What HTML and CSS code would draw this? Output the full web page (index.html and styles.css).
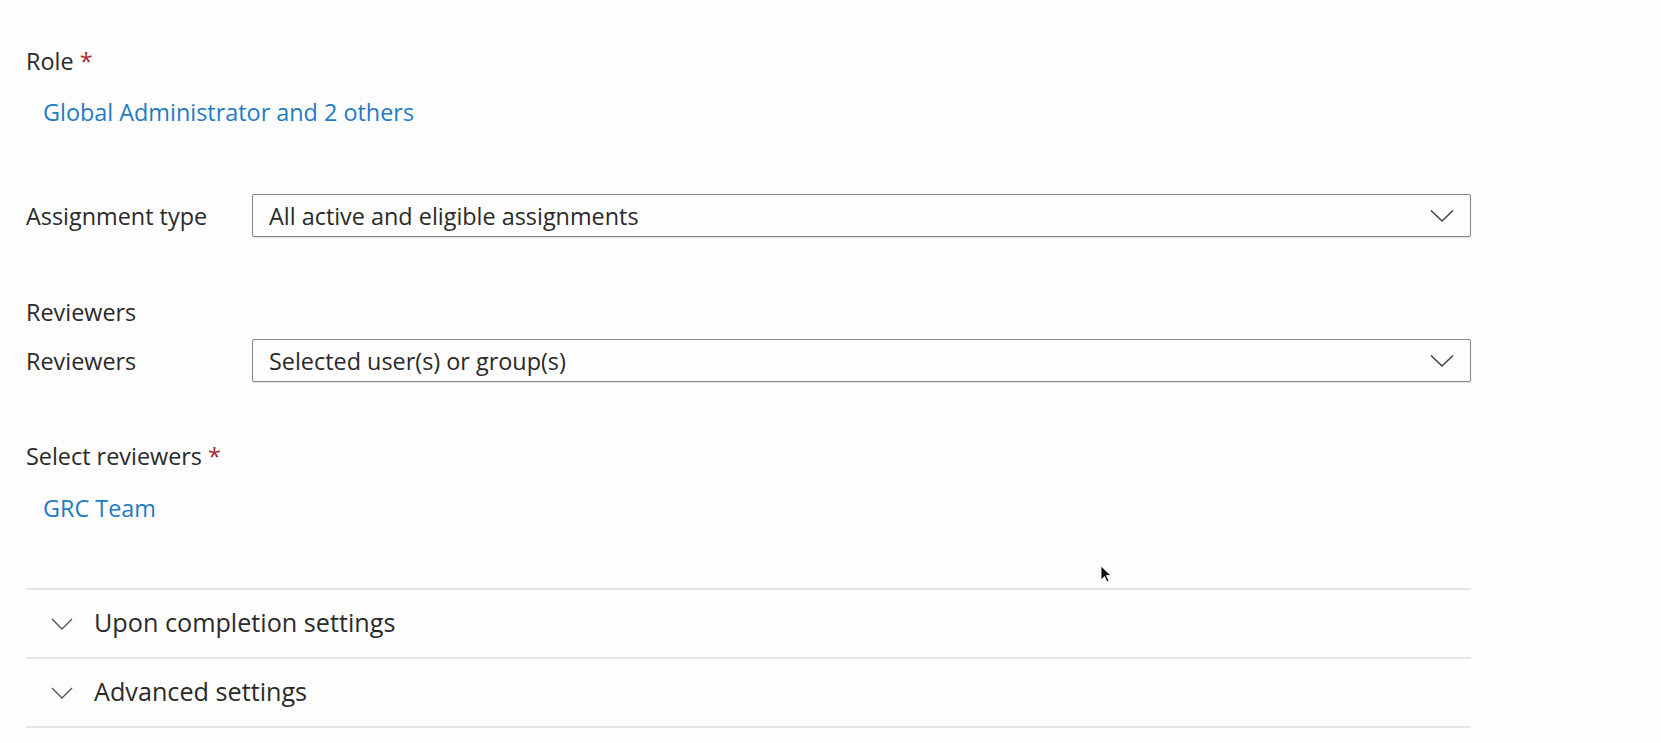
FILE: index.html
```html
<!DOCTYPE html>
<html lang="en">
<head>
<meta charset="utf-8">
<title>Access review</title>
<link rel="stylesheet" href="styles.css">
</head>
<body>
<main class="page">
  <div class="label">Role <span class="req">*</span></div>
  <a class="link link-role" href="#">Global Administrator and 2 others</a>

  <div class="row row-assign">
    <div class="row-label">Assignment type</div>
    <div class="select">
      <span>All active and eligible assignments</span>
      <svg class="caret" width="24" height="14" viewBox="0 0 24 14"><path d="M1 1.5 L12 12 L23 1.5" fill="none" stroke="#444" stroke-width="1.6"/></svg>
    </div>
  </div>

  <div class="label label-section">Reviewers</div>
  <div class="row row-reviewers">
    <div class="row-label">Reviewers</div>
    <div class="select">
      <span>Selected user(s) or group(s)</span>
      <svg class="caret" width="24" height="14" viewBox="0 0 24 14"><path d="M1 1.5 L12 12 L23 1.5" fill="none" stroke="#444" stroke-width="1.6"/></svg>
    </div>
  </div>

  <div class="label label-select">Select reviewers <span class="req">*</span></div>
  <a class="link link-grc" href="#">GRC Team</a>

  <div class="accordion">
    <div class="acc-item">
      <svg class="acc-chev" width="22" height="12" viewBox="0 0 22 12"><path d="M1 1 L11 11 L21 1" fill="none" stroke="#555" stroke-width="1.4"/></svg>
      <span>Upon completion settings</span>
    </div>
    <div class="acc-item">
      <svg class="acc-chev" width="22" height="12" viewBox="0 0 22 12"><path d="M1 1 L11 11 L21 1" fill="none" stroke="#555" stroke-width="1.4"/></svg>
      <span>Advanced settings</span>
    </div>
  </div>

  <svg class="cursor" width="14" height="20" viewBox="0 0 14 20"><path d="M1 1 L1 15 L4.5 11.5 L7 17 L9 16 L6.5 10.5 L11 10.5 Z" fill="#111" stroke="#fff" stroke-width="0.8"/></svg>
</main>
</body>
</html>
```

FILE: styles.css
```css
html, body {
  margin: 0;
  padding: 0;
  background: #fdfdfd;
}
body {
  font-family: "Open Sans", "Noto Sans", sans-serif;
  font-size: 23.4px;
  color: #2b2a29;
}
.page {
  position: relative;
  width: 1445px;
  padding: 47px 0 0 26px;
  height: 696px;
}
.label {
  line-height: 28px;
  height: 28px;
}
.req {
  color: #a4262c;
}
.link {
  display: block;
  width: max-content;
  color: #1f7bc4;
  text-decoration: none;
  line-height: 28px;
  padding-left: 17px;
}
.link-role {
  margin-top: 23px;
}
.row {
  display: flex;
  align-items: center;
}
.row-label {
  width: 226px;
  flex: none;
  line-height: 28px;
}
.select {
  flex: 1;
  height: 41px;
  border: 1px solid #8a8886;
  border-radius: 2px;
  display: flex;
  align-items: center;
  justify-content: space-between;
  padding: 0 16px 0 16px;
  box-shadow: 0 1px 1px rgba(0,0,0,0.12);
}
.row-assign {
  margin-top: 68px;
}
.label-section {
  margin-top: 61px;
}
.row-reviewers {
  margin-top: 13px;
}
.label-select {
  margin-top: 60px;
}
.link-grc {
  margin-top: 24px;
}
.accordion {
  margin-top: 66px;
  border-bottom: 2px solid #e6e5e4;
}
.acc-item {
  display: flex;
  align-items: center;
  height: 67px;
  border-top: 2px solid #e6e5e4;
  padding-left: 25px;
  gap: 21px;
  font-size: 25.2px;
}
.acc-item span {
  position: relative;
  top: -2px;
}
.acc-chev {
  flex: none;
}
.cursor {
  position: absolute;
  left: 1100px;
  top: 565px;
}
```
